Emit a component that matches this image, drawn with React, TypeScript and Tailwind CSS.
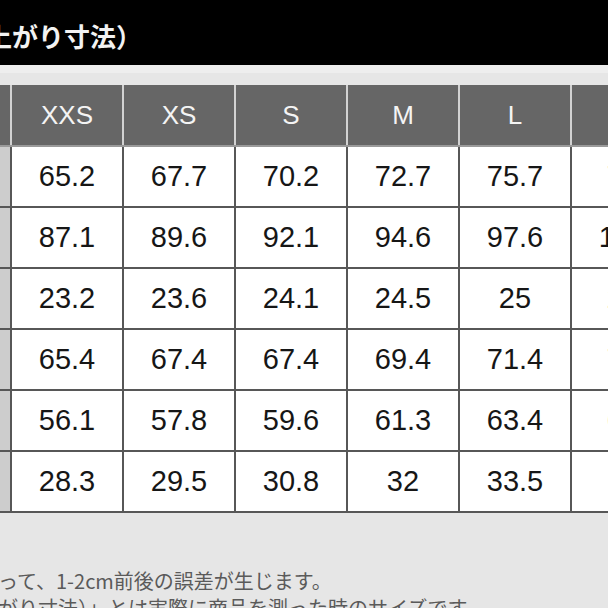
import React from "react";

const sizes = ["XXS", "XS", "S", "M", "L", "XL"];

const rows: string[][] = [
  ["65.2", "67.7", "70.2", "72.7", "75.7", "78.7"],
  ["87.1", "89.6", "92.1", "94.6", "97.6", "100.1"],
  ["23.2", "23.6", "24.1", "24.5", "25", "25.5"],
  ["65.4", "67.4", "67.4", "69.4", "71.4", "73.4"],
  ["56.1", "57.8", "59.6", "61.3", "63.4", "65.5"],
  ["28.3", "29.5", "30.8", "32", "33.5", "35"],
];

const jp = { fontFamily: '"Noto Sans CJK JP", "Noto Sans", sans-serif' };
const num = { fontFamily: '"Liberation Sans", Arial, sans-serif' };

const App: React.FC = () => {
  return (
    <div className="w-[608px] h-[608px] overflow-hidden bg-[#e6e6e6]">
      {/* title bar */}
      <div className="h-[65px] bg-black flex items-center pt-[6px] overflow-hidden">
        <span className="ml-[-14px] whitespace-nowrap text-[26px] font-bold leading-none text-[#f2f2f2]" style={jp}>
          上がり寸法）
        </span>
      </div>
      <div className="h-[20px] bg-[#e6e6e6] border-t-[8px] border-[#eeeeee]" />

      {/* table */}
      <div className="w-[900px]" style={num}>
        <div className="flex h-[60px] gap-[2px] bg-[#d2d2d2]">
          <div className="w-[10px] shrink-0 bg-[#666666]" />
          {sizes.map((s, i) => (
            <div
              key={s}
              className={`${i === 5 ? "w-[126px]" : "w-[110px]"} shrink-0 bg-[#666666] flex items-center justify-center text-[26px] text-[#f4f4f4]`}>
              {s}
            </div>
          ))}
        </div>
        <div className="h-[2px] bg-[#9a9a9a]" />
        <div className="flex flex-col gap-[2px] bg-[#575757] pb-[2px]">
          {rows.map((r, ri) => (
            <div key={ri} className="flex h-[59px] gap-[2px]">
              <div className="w-[10px] shrink-0 bg-[#cdcdcd]" />
              {r.map((v, ci) => (
                <div
                  key={ci}
                  className={`${ci === 5 ? "w-[126px]" : "w-[110px]"} shrink-0 bg-white flex items-center justify-center text-[29px] text-[#161616]`}>
                  {v}
                </div>
              ))}
            </div>
          ))}
        </div>
      </div>

      {/* notes */}
      <div className="pt-[54px] text-[20px] leading-[27px] text-[#5a5a5a] whitespace-nowrap" style={jp}>
        <p className="ml-[-2px]">って、1-2cm前後の誤差が生じます。</p>
        <p className="ml-[-2px]">がり寸法）」とは実際に商品を測った時のサイズです。</p>
      </div>
    </div>
  );
};

export default App;
